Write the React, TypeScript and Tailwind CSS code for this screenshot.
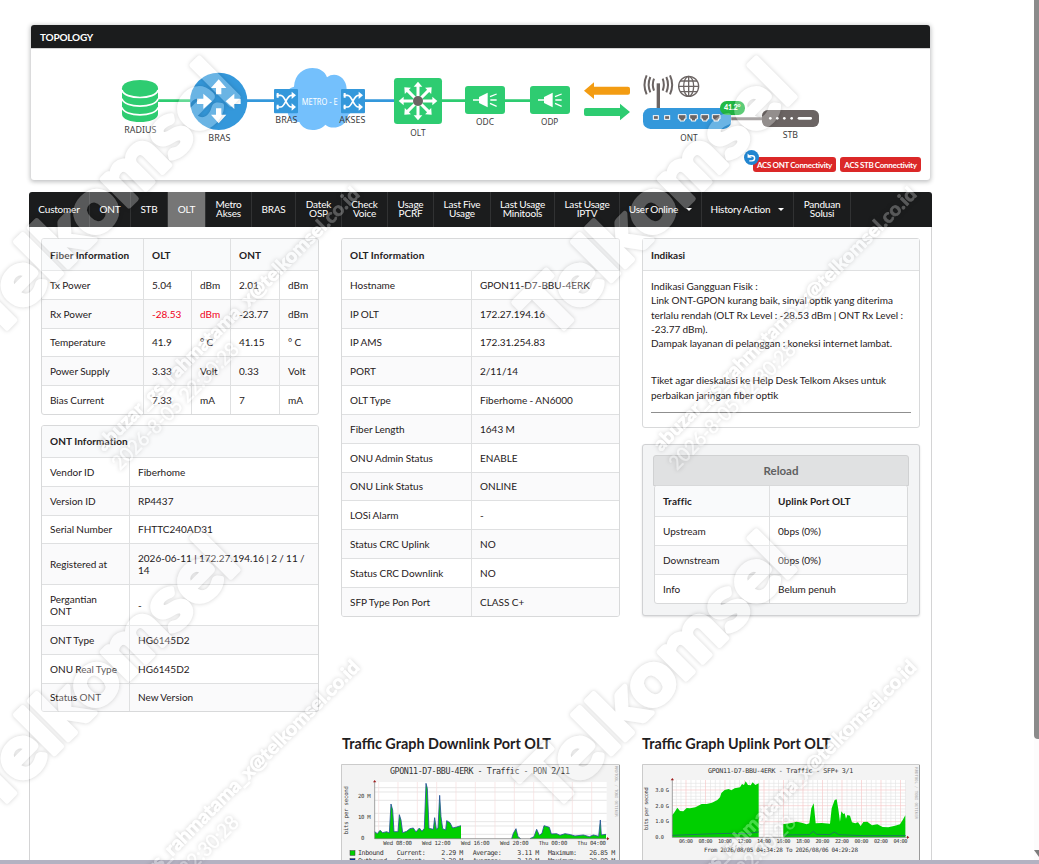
import clsx from "clsx";
import type { ReactNode } from "react";

const NAV = [
  { label: "Customer", w: "w-[61px]" },
  { label: "ONT", w: "w-[41px]" },
  { label: "STB", w: "w-[37px]" },
  { label: "OLT", w: "w-[38px]", active: true },
  { label: "Metro Akses", w: "w-[46px]" },
  { label: "BRAS", w: "w-[44px]" },
  { label: "Datek OSP", w: "w-[46px]" },
  { label: "Check Voice", w: "w-[46px]" },
  { label: "Usage PCRF", w: "w-[46px]" },
  { label: "Last Five Usage", w: "w-[57px]" },
  { label: "Last Usage Minitools", w: "w-[64px]" },
  { label: "Last Usage IPTV", w: "w-[65px]" },
  { label: "User Online", w: "w-[82px]", caret: true },
  { label: "History Action", w: "w-[92px]", caret: true },
  { label: "Panduan Solusi", w: "w-[57px]" },
];

const FIBER = [
  ["Tx Power", "5.04", "dBm", "2.01", "dBm"],
  ["Rx Power", "-28.53", "dBm", "-23.77", "dBm"],
  ["Temperature", "41.9", "° C", "41.15", "° C"],
  ["Power Supply", "3.33", "Volt", "0.33", "Volt"],
  ["Bias Current", "7.33", "mA", "7", "mA"],
];

const ONT_INFO = [
  ["Vendor ID", "Fiberhome"],
  ["Version ID", "RP4437"],
  ["Serial Number", "FHTTC240AD31"],
  ["Registered at", "2026-06-11 | 172.27.194.16 | 2 / 11 / 14"],
  ["Pergantian ONT", "-"],
  ["ONT Type", "HG6145D2"],
  ["ONU Real Type", "HG6145D2"],
  ["Status ONT", "New Version"],
];

const OLT_INFO = [
  ["Hostname", "GPON11-D7-BBU-4ERK"],
  ["IP OLT", "172.27.194.16"],
  ["IP AMS", "172.31.254.83"],
  ["PORT", "2/11/14"],
  ["OLT Type", "Fiberhome - AN6000"],
  ["Fiber Length", "1643 M"],
  ["ONU Admin Status", "ENABLE"],
  ["ONU Link Status", "ONLINE"],
  ["LOSi Alarm", "-"],
  ["Status CRC Uplink", "NO"],
  ["Status CRC Downlink", "NO"],
  ["SFP Type Pon Port", "CLASS C+"],
];

const TRAFFIC = [
  ["Upstream", "0bps (0%)"],
  ["Downstream", "0bps (0%)"],
  ["Info", "Belum penuh"],
];

function Row({ cells, cols, i, red }: { cells: string[]; cols: string; i: number; red?: boolean }) {
  const tall = cells[0] === "Registered at" || cells[0] === "Pergantian ONT";
  return (
    <div
      className={clsx(
        "grid border-b border-[#dfe0e1] last:border-b-0",
        cols,
        tall ? "h-[40.8px]" : "h-[28.8px] last:h-[27.8px]",
        i % 2 === 1 && "bg-[#fafafb]"
      )}
    >
      {cells.map((c, n) => (
        <div
          key={n}
          className={clsx(
            "flex items-center px-2 leading-[12px] border-l border-[#dfe0e1] first:border-l-0",
            red && (n === 1 || n === 2) && "text-[#f00020]"
          )}
        >
          <span className={tall && n === 0 ? "max-w-[64px]" : ""}>{c}</span>
        </div>
      ))}
    </div>
  );
}

function Table({ title, cols, rows, head = "h-[32px] pt-[2px]" }: { title: string[]; cols: string; rows: string[][]; head?: string }) {
  return (
    <div className="border border-[#d8d9da] rounded-[3px] overflow-hidden bg-white">
      <div className={clsx("bg-[#f9fafb] border-b border-[#dfe0e1] font-bold tracking-[0.12px]", head, title.length > 1 && "grid", title.length > 1 && cols)}>
        {title.map((t) => (
          <div key={t} className="flex h-full items-center px-2 border-l border-[#dfe0e1] first:border-l-0">
            {t}
          </div>
        ))}
      </div>
      {rows.map((r, i) => (
        <Row key={r[0]} cells={r} cols={cols} i={i} />
      ))}
    </div>
  );
}

function FiberTable() {
  return (
    <div className="border border-[#d8d9da] rounded-[3px] overflow-hidden bg-white">
      <div className="grid grid-cols-[101px_87px_1fr] h-[32px] bg-[#f9fafb] border-b border-[#dfe0e1] font-bold tracking-[0.12px]">
        {["Fiber Information", "OLT", "ONT"].map((t) => (
          <div key={t} className="flex items-center px-2 pt-[2px] border-l border-[#dfe0e1] first:border-l-0 whitespace-nowrap">
            {t}
          </div>
        ))}
      </div>
      {FIBER.map((r, i) => (
        <Row key={r[0]} cells={r} cols="grid-cols-[101px_48px_39px_49px_1fr]" i={i} red={i === 1} />
      ))}
    </div>
  );
}

const caption = {
  fontFamily: "'Noto Sans', sans-serif",
  fontSize: 27,
  fill: "#3c3c3c",
  textAnchor: "middle" as const,
};

function Label({ x, y, w, children }: { x: number; y: number; w: number; children: ReactNode }) {
  return (
    <text x={x} y={y} textLength={w} lengthAdjust="spacingAndGlyphs" {...caption}>
      {children}
    </text>
  );
}

// Fat arrow pointing right, centred on the origin
const ARROW = "M-22-8H-3V-23L23 0-3 23V8H-22Z";

function Shuffle({ x, y }: { x: number; y: number }) {
  return (
    <g transform={`translate(${x} ${y})`}>
      <rect width="72" height="73" rx="3" fill="#3498db" />
      <g fill="none" stroke="#fff" strokeWidth="5">
        <path d="M8 19H20C34 19 37 54 52 54H58M8 54H20C34 54 37 19 52 19H58" />
      </g>
      <path d="M53 8L66 19 53 30ZM53 43L66 54 53 65ZM8 12h6v14h-6zM8 47h6v14h-6z" fill="#fff" />
    </g>
  );
}

function Splitter({ x }: { x: number }) {
  return (
    <g transform={`translate(${x} 198)`}>
      <rect width="120" height="84" rx="9" fill="#2ecc71" />
      <path d="M42 33L68 20V64L42 51Z" fill="#fff" />
      <path d="M24 42H42M75 32L95 24M76 42H95M75 52L95 61" stroke="#fff" strokeWidth="4" fill="none" />
    </g>
  );
}

function Topology() {
  return (
    <svg className="block w-[899px] h-[107px]" viewBox="31 49 899 107">
      <g transform="translate(20 20) scale(.33333)">
        <path d="M410 242H520" stroke="#2ecc71" strokeWidth="8" />
        <path d="M680 242H770M1030 242H1125" stroke="#3498db" strokeWidth="8" />
        <path d="M306 205C306 172 414 172 414 205V282C414 314 306 314 306 282Z" fill="#2ecc71" />
        <g fill="none" stroke="#fff" strokeWidth="5">
          <path d="M306 210C312 240 408 240 414 210M306 236C312 266 408 266 414 236M306 262C312 292 408 292 414 262" />
        </g>
        <circle cx="596" cy="244" r="86" fill="#3498db" />
        <g fill="#fff">
          <path d={ARROW} transform="translate(553 244)" />
          <path d={ARROW} transform="translate(640 244) rotate(180)" />
          <path d={ARROW} transform="translate(596 201) rotate(-90)" />
          <path d={ARROW} transform="translate(596 287) rotate(90)" />
        </g>
        <path
          d="M822 200C826 132 908 130 921 172C945 153 979 171 980 207C1012 216 1010 272 985 284C982 318 938 334 916 314C898 335 852 338 838 306C812 308 798 284 804 262C788 236 798 205 822 200Z"
          fill="#74c0fc"
        />
        <Shuffle x={762} y={207} />
        <Shuffle x={963} y={207} />
        <text x="899" y="255" textLength="108" lengthAdjust="spacingAndGlyphs" {...caption} fill="#fff">
          METRO - E
        </text>
        <Label x={361} y={340} w={96}>RADIUS</Label>
        <Label x={598} y={364} w={66}>BRAS</Label>
        <Label x={799} y={310} w={66}>BRAS</Label>
        <Label x={997} y={310} w={78}>AKSES</Label>
      </g>

      <g transform="translate(360 20) scale(.33333)">
        <path d="M240 242H320M430 242H515" stroke="#2ecc71" strokeWidth="8" />
        <rect x="102" y="174" width="144" height="138" rx="10" fill="#2ecc71" />
        <g transform="translate(174 243)" fill="#fff">
          {[0, 45, 90, 135, 180, 225, 270, 315].map((a) => (
            <path key={a} d="M0-4.5H43V-13L58 0 43 13V4.500H0Z" transform={`rotate(${a})`} />
          ))}
          <circle r="15" fill="#6b6463" />
        </g>
        <Splitter x={315} />
        <Splitter x={510} />
        <path d="M672 212L702 187V200H804Q810 200 810 206V218Q810 224 804 224H702V237Z" fill="#f39c12" />
        <path d="M810 276L780 251V264H678Q672 264 672 270V282Q672 288 678 288H780V301Z" fill="#2ecc71" />

        <g stroke="#6b6463" fill="none" strokeWidth="6">
          <path d="M895 190V266" strokeWidth="10" />
          <path d="M882 176Q875 194 882 212M871 171Q861 194 871 217M860 166Q847 194 860 223M908 176Q915 194 908 212M919 171Q929 194 919 217M930 166Q943 194 930 223" />
          <g strokeWidth="4">
            <circle cx="986" cy="199" r="30" />
            <ellipse cx="986" cy="199" rx="15" ry="30" />
            <path d="M986 169V229M956 199H1016M961 183H1011M961 215H1011" />
          </g>
        </g>
        <path d="M1110 296H1220" stroke="#8b8585" strokeWidth="9" />
        <rect x="849" y="264" width="264" height="63" rx="22" fill="#3498db" />
        <g fill="#6b6463" stroke="#fff" strokeWidth="3">
          <rect x="880" y="287" width="15" height="11" />
          <rect x="914" y="287" width="15" height="11" />
          {[955, 989, 1023, 1057].map((x) => (
            <path key={x} d={`M${x} 284h23v13h-5v6h-13v-6h-5z`} />
          ))}
        </g>
        <Label x={174} y={347} w={46}>OLT</Label>
        <Label x={375} y={314} w={54}>ODC</Label>
        <Label x={569} y={314} w={52}>ODP</Label>
        <Label x={987} y={364} w={52}>ONT</Label>
      </g>

      <g transform="translate(700 20) scale(.33333)">
        <rect x="186" y="270" width="171" height="51" rx="17" fill="#6b6463" />
        <g fill="#fff">
          <circle cx="211" cy="295" r="4" />
          <circle cx="232" cy="295" r="4" />
          <circle cx="253" cy="295" r="4" />
          <circle cx="275" cy="295" r="4" />
          <rect x="293" y="291" width="43" height="8" rx="4" />
        </g>
        <rect x="60" y="243" width="75" height="42" rx="20" fill="#21ba45" />
        <text x="97" y="271" textAnchor="middle" fontFamily="Lato, sans-serif" fontWeight="900" fontSize="22" fill="#fff" textLength="50">
          41.2°
        </text>
        <Label x={271} y={353} w={46}>STB</Label>
      </g>
    </svg>
  );
}

const mono = { fontFamily: "'DejaVu Sans Mono', monospace", fill: "#333" };

function DownlinkGraph() {
  return (
    <svg className="block w-[279px] h-[96px]" viewBox="341 764 279 96">
      <rect x="341" y="764" width="279" height="120" fill="#f3f3f3" />
      <path d="M341.5 860V764.5H619.5" fill="none" stroke="#cbcbcb" />
      <path d="M619.5 765V860" stroke="#9b9b9b" />
      <g transform="translate(330 720) scale(.33333)">
        <rect x="134" y="186" width="696" height="170" fill="#fff" />
        <g stroke="#dadada" strokeWidth="2">
          <path d="M134 203H830M134 216H830M134 241H830M134 280H830M134 305H830M134 318H830M134 343H830" />
        </g>
        <g stroke="#f6dcdc" strokeWidth="2">
          <path d="M146 186V356M204 186V356M262 186V356M320 186V356M378 186V356M436 186V356M495 186V356M553 186V356M611 186V356M669 186V356M727 186V356M785 186V356" />
        </g>
        <path
          d="M134 356V335L142 341 150 331 158 338 170 335 178 339 183 252 188 270 192 335 204 335 208 284 213 300 218 338 230 334 240 326 250 324 258 336 268 324 276 334 283 325 288 190 292 205 297 325 310 328 314 293 319 328 324 324 329 226 333 290 338 326 347 330 350 302 360 308 368 324 380 321 393 317V356ZM545 356L550 340 558 326 564 350 572 356ZM600 356L612 350 620 328 628 346 636 340 642 317 658 322 664 342 680 341 690 346 705 341 722 344 735 348 760 345 778 350 790 345 806 349 811 300 814 345 828 343V356Z"
          fill="#00cf00"
        />
        <path
          d="M134 335L142 341 150 331 158 338 170 335 178 339 183 252 188 270 192 335 204 335 208 284 213 300 218 338 230 334 240 326 250 324 258 336 268 324 276 334 283 325 288 190 292 205 297 325 310 328 314 293 319 328 324 324 329 226 333 290 338 326 347 330 350 302 360 308 368 324 380 321 393 317M545 356L550 340 558 326 564 350 572 356M600 356L612 350 620 328 628 346 636 340 642 317 658 322 664 342 680 341 690 346 705 341 722 344 735 348 760 345 778 350 790 345 806 349 811 300 814 345 828 343"
          fill="none"
          stroke="#26509a"
          strokeWidth="2.5"
        />
        <path d="M134 186V356H832" fill="none" stroke="#777" strokeWidth="2" />
        <path d="M134 180l5 7h-10zM838 356l-7-5v10z" fill="#a02020" />
        <text x="180" y="161" fontSize="25" textLength="540" {...mono}>GPON11-D7-BBU-4ERK - Traffic - PON 2/11</text>
        <g fontSize="17" {...mono}>
          <text x="84" y="234" textLength="38">20 M</text>
          <text x="84" y="298" textLength="38">10 M</text>
          <text x="93" y="361">0</text>
          <text x="160" y="374" textLength="86">Wed 08:00</text>
          <text x="276" y="374" textLength="86">Wed 12:00</text>
          <text x="393" y="374" textLength="86">Wed 16:00</text>
          <text x="510" y="374" textLength="86">Wed 20:00</text>
          <text x="626" y="374" textLength="86">Thu 00:00</text>
          <text x="742" y="374" textLength="86">Thu 04:00</text>
          <text transform="translate(53 343) rotate(-90)" textLength="145">bits per second</text>
        </g>
        <text transform="translate(854 138) rotate(90)" fontSize="12" textLength="152" {...mono} fill="#aaa">RRDTOOL / TOBI OETIKER</text>
        <rect x="60" y="392" width="15" height="14" fill="#00cf00" stroke="#333" strokeWidth="1.5" />
        <rect x="60" y="416" width="15" height="14" fill="#002a97" stroke="#333" strokeWidth="1.5" />
        <g fontSize="20" {...mono}>
          <text x="84" y="405" textLength="77">Inbound</text>
          <text x="200" y="405" textLength="87">Current:</text>
          <text x="334" y="405" textLength="66">2.29 M</text>
          <text x="428" y="405" textLength="87">Average:</text>
          <text x="562" y="405" textLength="66">3.11 M</text>
          <text x="654" y="405" textLength="87">Maximum:</text>
          <text x="778" y="405" textLength="78">26.85 M</text>
          <text x="84" y="429" textLength="88">Outbound</text>
          <text x="200" y="429" textLength="87">Current:</text>
          <text x="334" y="429" textLength="66">2.38 M</text>
          <text x="428" y="429" textLength="87">Average:</text>
          <text x="562" y="429" textLength="66">3.18 M</text>
          <text x="654" y="429" textLength="87">Maximum:</text>
          <text x="778" y="429" textLength="78">28.89 M</text>
        </g>
      </g>
    </svg>
  );
}

const HOURS = ["06:00", "08:00", "10:00", "12:00", "14:00", "16:00", "18:00", "20:00", "22:00", "00:00", "02:00", "04:00"];

function UplinkGraph() {
  return (
    <svg className="block w-[278px] h-[96px]" viewBox="642 764 278 96">
      <rect x="642" y="764" width="278" height="120" fill="#f3f3f3" />
      <path d="M642.5 860V764.5H919.5" fill="none" stroke="#cbcbcb" />
      <path d="M919.5 765V860" stroke="#9b9b9b" />
      <g transform="translate(630 720) scale(.33333)">
        <rect x="127" y="180" width="700" height="172" fill="#fff" />
        <g stroke="#e6e6e6" strokeWidth="2">
          <path d="M127 190H827M127 200H827M127 219H827M127 229H827M127 238H827M127 248H827M127 267H827M127 276H827M127 286H827M127 295H827M127 314H827M127 324H827M127 333H827M127 343H827" />
          {HOURS.map((h, i) => (
            <path key={h} d="M-29 180V352M-15 180V352M15 180V352" transform={`translate(${168 + i * 58.5} 0)`} />
          ))}
        </g>
        <g stroke="#f6c9c9" strokeWidth="2">
          <path d="M127 210H827M127 257H827M127 305H827" />
          {HOURS.map((h, i) => (
            <path key={h} d="M0 180V352" transform={`translate(${168 + i * 58.5} 0)`} />
          ))}
        </g>
        <path
          d="M127 352V285L134 276 142 263 150 273 160 274 170 264 180 265 196 262 215 252 230 252 246 248 262 240 270 232 274 219 284 210 296 207 304 211 314 205 330 202 336 192 342 195 347 184 354 195 362 196 368 187 376 195 386 190V352ZM460 352V312L480 310 500 305 515 308 530 313 538 310 544 265 551 250 557 310 575 309 600 311 605 265 614 240 620 238 625 268 630 305 634 274 640 282 644 280 648 296 652 285 660 287 666 307 676 310 684 307 692 318 700 306 712 305 726 316 742 313 758 321 775 322 795 317 810 313 818 300 826 286V352Z"
          fill="#00cf00"
        />
        <path
          d="M127 346L230 342 300 340 350 341 386 336M460 345L538 344 550 334 560 343 600 344 613 336 626 344 700 347 827 347"
          fill="none"
          stroke="#1c7a55"
          strokeWidth="3"
        />
        <path d="M127 180V352H832" fill="none" stroke="#777" strokeWidth="2" />
        <path d="M127 174l5 7h-10zM838 352l-7-5v10z" fill="#a02020" />
        <text x="234" y="158" fontSize="20" textLength="436" {...mono}>GPON11-D7-BBU-4ERK - Traffic - SFP+ 3/1</text>
        <g fontSize="16" {...mono}>
          <text x="76" y="215" textLength="41">3.0 G</text>
          <text x="76" y="263" textLength="41">2.0 G</text>
          <text x="76" y="310" textLength="41">1.0 G</text>
          <text x="76" y="357" textLength="26">0.0</text>
          {HOURS.map((h, i) => (
            <text key={h} x={147 + i * 58.5} y="368" textLength="42">{h}</text>
          ))}
          <text transform="translate(55 330) rotate(-90)" textLength="128">bits per second</text>
          <text x="222" y="395" fontSize="18" textLength="462">From 2026/08/05 04:34:28 To 2026/08/06 04:29:28</text>
        </g>
        <text transform="translate(854 142) rotate(90)" fontSize="12" textLength="155" {...mono} fill="#aaa">RRDTOOL / TOBI OETIKER</text>
      </g>
    </svg>
  );
}

const TILES = [
  [0, 0],
  [557, 0],
  [0, 473],
  [557, 473],
];

function Watermark() {
  return (
    <svg className="absolute inset-0 w-full h-full pointer-events-none" viewBox="0 0 1039 864">
      <defs>
        <filter id="halo" x="0" y="0" width="1039" height="864" filterUnits="userSpaceOnUse" colorInterpolationFilters="sRGB">
          <feGaussianBlur in="SourceAlpha" stdDeviation="2" result="b" />
          <feFlood floodColor="#000" floodOpacity=".18" />
          <feComposite in2="b" operator="in" />
          <feComposite in2="SourceAlpha" operator="out" result="shadow" />
          <feFlood floodColor="#fff" floodOpacity=".27" />
          <feComposite in2="SourceAlpha" operator="in" result="body" />
          <feMerge>
            <feMergeNode in="shadow" />
            <feMergeNode in="body" />
          </feMerge>
        </filter>
      </defs>
      <g filter="url(#halo)" fill="#fff" stroke="#fff" strokeLinejoin="round" fontFamily="Lato, sans-serif">
        {TILES.map(([x, y]) => (
          <g key={`${x}-${y}`} transform={`translate(${x} ${y})`}>
            <text transform="translate(-6 341) rotate(-45)" fontSize="74" fontWeight="700" strokeWidth="5" textLength="350" lengthAdjust="spacingAndGlyphs">
              Telkomsel
            </text>
            <text transform="translate(104 452) rotate(-45)" fontSize="19" fontWeight="700" strokeWidth=".7" textLength="363" lengthAdjust="spacingAndGlyphs">
              abuzar_gs_rahmatama_x@telkomsel.co.id
            </text>
            <text transform="translate(120 471) rotate(-45)" fontSize="20" strokeWidth=".3" textLength="170" lengthAdjust="spacingAndGlyphs">
              2026-8-05 22:30:28
            </text>
          </g>
        ))}
      </g>
    </svg>
  );
}

export default function App() {
  return (
    <div className="relative flex h-[864px] w-[1039px] flex-col overflow-hidden bg-white font-['Lato',sans-serif] text-[10px] text-[#1f2021] [word-spacing:-0.25px]">
      <div className="flex h-[860px]">
        <main className="flex w-[1034px] flex-col pl-[29px] pt-[25px]">
          {/* Topology */}
          <section className="ml-[2px] h-[155px] w-[899px] rounded-[3px] bg-white shadow-[0_1px_4px_1px_rgba(34,36,38,0.28)]">
            <h2 className="flex h-[23px] items-center rounded-t-[3px] bg-[#1b1c1d] pl-[9px] pt-[2px] text-[10px] font-bold tracking-[-0.2px] text-white">TOPOLOGY</h2>
            <div className="h-px bg-[#d4d4d5]" />
            <Topology />
            <div className="flex justify-end gap-1 pr-[9px] pt-px">
              <div className="relative flex h-[15px] w-[83px] items-center justify-center rounded-[3px] bg-[#db2828] text-[8px] font-bold tracking-[-0.3px] text-white whitespace-nowrap">
                ACS ONT Connectivity
                <span className="absolute -left-[9px] -top-[7px] flex size-[15px] items-center justify-center rounded-full bg-[#2185d0]">
                  <svg viewBox="0 0 16 16" className="size-[9px]" fill="none" stroke="#fff" strokeWidth="2.6">
                    <path d="M4 5H9A4.500 4.500 0 0 1 9 14H4" />
                    <path d="M1 1V8.500H8.500Z" fill="#fff" stroke="none" />
                  </svg>
                </span>
              </div>
              <div className="flex h-[15px] w-[81px] items-center justify-center rounded-[3px] bg-[#db2828] text-[8px] font-bold tracking-[-0.3px] text-white whitespace-nowrap">
                ACS STB Connectivity
              </div>
            </div>
          </section>

          {/* Tabs */}
          <nav className="mt-[12px] flex h-[35px] w-[903px] shrink-0 overflow-hidden rounded-t-[3px] bg-[#1b1c1d] tracking-[-0.2px] text-white">
            {NAV.map((n) => (
              <div
                key={n.label}
                className={clsx(
                  "flex shrink-0 items-center justify-center border-r border-[#313233] px-[6px] pb-px text-center leading-[9px]",
                  n.w,
                  n.active && "bg-[#767676]"
                )}
              >
                <span className={n.caret ? "whitespace-nowrap" : ""}>{n.label}</span>
                {n.caret && <span className="ml-[8px] border-x-[3px] border-t-[3px] border-x-transparent border-t-white" />}
              </div>
            ))}
          </nav>

          <div className="grid h-[633px] w-[903px] grid-cols-[278px_279px_278px] gap-x-[22px] border-x border-[#d4d4d5] pl-[11px] pt-[11px]">
            <div className="flex flex-col gap-[10px]">
              <FiberTable />
              <Table title={["ONT Information"]} cols="grid-cols-[87px_1fr]" rows={ONT_INFO} head="h-[32px]" />
            </div>

            <div>
              <Table title={["OLT Information"]} cols="grid-cols-[129px_1fr]" rows={OLT_INFO} />
              <h3 className="mt-[117px] mb-[10px] h-[20px] pl-px text-[14.4px] leading-[20px] font-bold whitespace-nowrap [word-spacing:0px]">Traffic Graph Downlink Port OLT</h3>
              <DownlinkGraph />
            </div>

            <div>
              <div className="h-[190px] rounded-[3px] border border-[#d8d9da]">
                <div className="flex h-[32px] items-center border-b border-[#dfe0e1] bg-[#f9fafb] px-2 pt-[2px] font-bold">Indikasi</div>
                <div className="px-2 pt-[8px] leading-[14.3px] whitespace-nowrap">
                  <p>
                    Indikasi Gangguan Fisik :<br />
                    Link ONT-GPON kurang baik, sinyal optik yang diterima<br />
                    terlalu rendah (OLT Rx Level : -28.53 dBm | ONT Rx Level :<br />
                    -23.77 dBm).<br />
                    Dampak layanan di pelanggan : koneksi internet lambat.
                  </p>
                  <p className="mt-[23px]">
                    Tiket agar dieskalasi ke Help Desk Telkom Akses untuk<br />
                    perbaikan jaringan fiber optik
                  </p>
                  <hr className="mt-[10px] border-[#8f8f8f]" />
                </div>
              </div>

              <div className="mt-[16px] h-[172px] rounded-[3px] border border-[#d0d1d3] bg-[#f3f4f5] px-[10px] pt-[10px] shadow-[0_1px_2px_rgba(34,36,38,0.15)]">
                <button className="block h-[31px] w-full rounded-t-[3px] border border-[#d0d1d2] bg-[#e0e1e2] text-[11.5px] font-bold text-[#5f6061]">Reload</button>
                <div className="mx-px -mt-px">
                  <Table title={["Traffic", "Uplink Port OLT"]} cols="grid-cols-[114px_1fr]" rows={TRAFFIC} head="h-[31.4px]" />
                </div>
              </div>

              <h3 className="mt-[118px] mb-[10px] h-[20px] text-[14.4px] leading-[20px] font-bold whitespace-nowrap [word-spacing:0px]">Traffic Graph Uplink Port OLT</h3>
              <UplinkGraph />
            </div>
          </div>
        </main>

        {/* Scrollbar */}
        <div className="flex w-[5px] flex-col justify-between bg-[#fcfcfc]">
          <div className="h-[739px] rounded-bl-[4px] bg-[#8b8b8b]" />
          <svg className="mb-[3px] h-[8px] w-[5px]" viewBox="0 0 5 8">
            <path d="M0 1H5V8Z" fill="#7c7c7c" />
          </svg>
        </div>
      </div>
      <div className="h-[4px] bg-[#b4b2c2]" />
      <Watermark />
    </div>
  );
}
